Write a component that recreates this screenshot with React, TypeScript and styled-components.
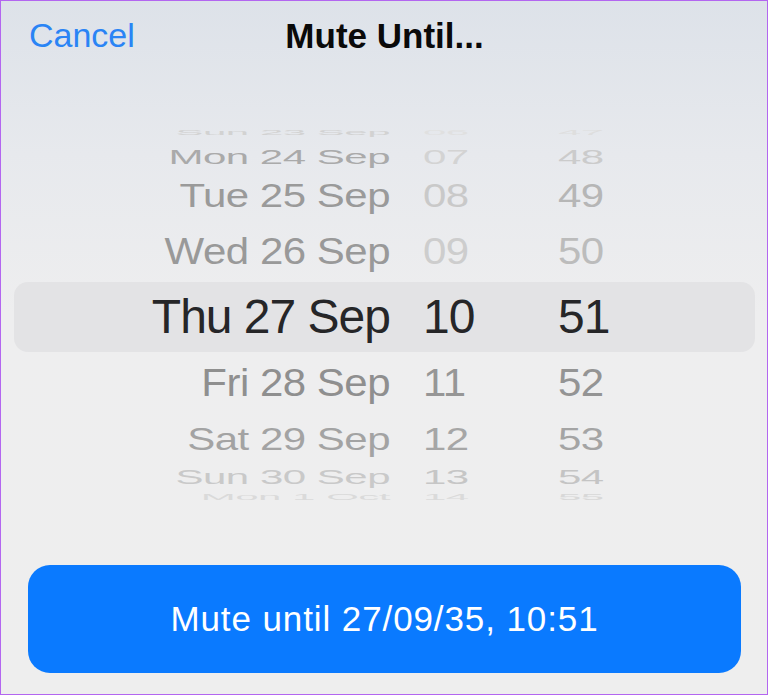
import styled, { createGlobalStyle } from 'styled-components';

type WheelRow = {
    date: string,
    hour: string,
    minute: string,
    height: number,
    squash: number,
    dateColor: string,
    hourColor: string,
    minuteColor: string,
    selected?: boolean
}

const rows: WheelRow[] = [
    { date: 'Sun 23 Sep', hour: '06', minute: '47', height: 22, squash: 0.18, dateColor: '#d2d2d2', hourColor: '#e0e0e0', minuteColor: '#dedede' },
    { date: 'Mon 24 Sep', hour: '07', minute: '48', height: 27, squash: 0.5, dateColor: '#aaaaaa', hourColor: '#d3d3d3', minuteColor: '#cbcbcb' },
    { date: 'Tue 25 Sep', hour: '08', minute: '49', height: 52, squash: 0.78, dateColor: '#9a9a9a', hourColor: '#c9c9c9', minuteColor: '#b6b6b6' },
    { date: 'Wed 26 Sep', hour: '09', minute: '50', height: 60, squash: 0.86, dateColor: '#999999', hourColor: '#cdcdcd', minuteColor: '#bcbcbc' },
    { date: 'Thu 27 Sep', hour: '10', minute: '51', height: 70, squash: 1, dateColor: '#262628', hourColor: '#262628', minuteColor: '#262628', selected: true },
    { date: 'Fri 28 Sep', hour: '11', minute: '52', height: 62, squash: 0.92, dateColor: '#8f8f8f', hourColor: '#969696', minuteColor: '#949494' },
    { date: 'Sat 29 Sep', hour: '12', minute: '53', height: 50, squash: 0.76, dateColor: '#a3a3a3', hourColor: '#a6a6a6', minuteColor: '#a4a4a4' },
    { date: 'Sun 30 Sep', hour: '13', minute: '54', height: 26, squash: 0.5, dateColor: '#c9c9c9', hourColor: '#c6c6c6', minuteColor: '#c4c4c4' },
    { date: 'Mon 1 Oct', hour: '14', minute: '55', height: 14, squash: 0.2, dateColor: '#dadada', hourColor: '#dadada', minuteColor: '#d8d8d8' },
];

const GlobalStyle = createGlobalStyle`
    html, body {
        margin: 0;
        padding: 0;
        background: #eeeeee;
    }
    body {
        font-family: "Liberation Sans", Arial, sans-serif;
        -webkit-font-smoothing: antialiased;
    }
`;

const Frame = styled.div`
    width: 768px;
    height: 695px;
    box-sizing: border-box;
    border: 1px solid #b366f0;
    background: linear-gradient(180deg, #dde2e9 0%, #e7e9ed 22%, #eeeeef 45%, #eeeeee 100%);
    display: flex;
    flex-direction: column;
    overflow: hidden;
`;

const Header = styled.div`
    height: 69px;
    display: grid;
    grid-template-columns: 1fr auto 1fr;
    align-items: center;
    padding: 0 27px 0 28px;
`;

const CancelButton = styled.span`
    justify-self: start;
    color: #2a84f5;
    font-size: 34px;
`;

const Title = styled.span`
    color: #0a0a0a;
    font-size: 35px;
    font-weight: 700;
`;

const Wheel = styled.div`
    margin: 51px 12px 0 13px;
    display: flex;
    flex-direction: column;
`;

const Row = styled.div<{ $height: number, $selected?: boolean }>`
    height: ${p => p.$height}px;
    display: grid;
    grid-template-columns: 376px 168px 1fr;
    grid-template-rows: minmax(0, 1fr);
    align-items: center;
    border-radius: 14px;
    background: ${p => p.$selected ? '#e3e3e5' : 'transparent'};
`;

const Cell = styled.span<{ $squash: number, $color: string, $selected?: boolean }>`
    display: block;
    color: ${p => p.$color};
    font-size: ${p => p.$selected ? 48 : 42}px;
    letter-spacing: ${p => p.$selected ? -1 : -0.5}px;
    line-height: 1;
    white-space: nowrap;
    transform: scaleY(${p => p.$squash});
`;

const DateCell = styled(Cell)`
    text-align: right;
`;

const HourCell = styled(Cell)`
    padding-left: 33px;
`;

const MinuteCell = styled(Cell)`
    padding-left: 0;
`;

const Footer = styled.div`
    margin-top: 61px;
    padding: 0 26px 0 27px;
`;

const MuteButton = styled.button`
    width: 100%;
    height: 108px;
    border: none;
    border-radius: 22px;
    background: #0a7aff;
    color: #ffffff;
    font-family: "Liberation Sans", Arial, sans-serif;
    font-size: 35px;
    letter-spacing: 0.9px;
    cursor: pointer;
`;

const App = () => {
    return (
        <>
            <GlobalStyle />
            <Frame>
                <Header>
                    <CancelButton>Cancel</CancelButton>
                    <Title>Mute Until...</Title>
                </Header>
                <Wheel>
                    {rows.map(row => (
                        <Row key={row.date} $height={row.height} $selected={row.selected}>
                            <DateCell $squash={row.squash} $color={row.dateColor} $selected={row.selected}>{row.date}</DateCell>
                            <HourCell $squash={row.squash} $color={row.hourColor} $selected={row.selected}>{row.hour}</HourCell>
                            <MinuteCell $squash={row.squash} $color={row.minuteColor} $selected={row.selected}>{row.minute}</MinuteCell>
                        </Row>
                    ))}
                </Wheel>
                <Footer>
                    <MuteButton>Mute until 27/09/35, 10:51</MuteButton>
                </Footer>
            </Frame>
        </>
    );
};

export default App;
